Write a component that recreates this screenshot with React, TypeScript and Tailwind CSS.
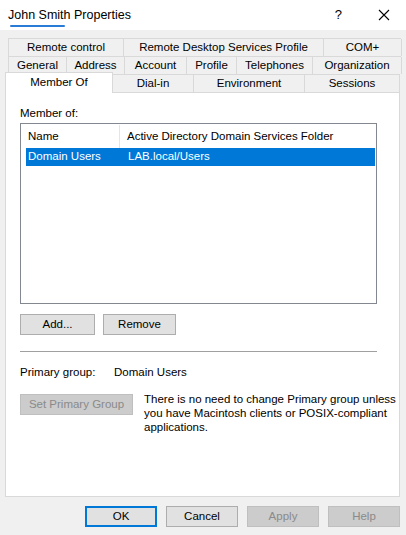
import React from 'react'

const row1 = [
    { name: 'Remote control', w: 'w-[116px]' },
    { name: 'Remote Desktop Services Profile', w: 'w-[201px]' },
    { name: 'COM+', w: 'flex-1' },
]

const row2 = [
    { name: 'General', w: 'w-[59px]' },
    { name: 'Address', w: 'w-[59px]' },
    { name: 'Account', w: 'w-[63px]' },
    { name: 'Profile', w: 'w-[51px]' },
    { name: 'Telephones', w: 'w-[77px]' },
    { name: 'Organization', w: 'flex-1' },
]

const row3 = [
    { name: 'Dial-in', w: 'w-[81px]' },
    { name: 'Environment', w: 'w-[111px]' },
    { name: 'Sessions', w: 'flex-1' },
]

const Btn: React.FC<{ label: string; w: string; disabled?: boolean; primary?: boolean }> = ({ label, w, disabled, primary }) => {
    let cls = 'bg-[#e1e1e1] border border-[#adadad] text-black'
    if (disabled) cls = 'bg-[#cccccc] border border-[#bfbfbf] text-[#8a8a8a]'
    if (primary) cls = 'bg-[#e1e1e1] border-2 border-[#0078d7] text-black'
    return (
        <div className={`${w} h-[21px] shrink-0 flex items-center justify-center ${cls}`}>{label}</div>
    )
}

const App: React.FC = () => {
    return (
        <div className="w-[406px] h-[535px] bg-[#f0f0f0] text-[11.5px] text-black overflow-hidden" style={{ fontFamily: '"Liberation Sans", Arial, sans-serif' }}>
            {/* title bar */}
            <div className="h-[30px] bg-white flex items-center pl-[8px] pr-[14px]">
                <div className="relative text-[12.5px]">
                    John Smith Properties
                    <div className="absolute left-[2px] top-[19px] w-[55px] h-[2px] rounded-full bg-[#2a7bd6]" />
                </div>
                <div className="flex-1" />
                <span className="text-[13px] mr-[36px]">?</span>
                <svg width="12" height="12" viewBox="0 0 12 12" className="mr-[2px]">
                    <path d="M1 1 L11 11 M11 1 L1 11" stroke="#000" strokeWidth="1.1" />
                </svg>
            </div>

            <div className="pl-[5px] pr-[6px] pt-[8px]">
                {/* tabs */}
                <div className="ml-[3px] mr-[-1px] flex h-[18px] border-t border-[#d9d9d9]">
                    {row1.map((t, i) => (
                        <div key={i} className={`${t.w} border-l border-r border-[#d9d9d9] -mr-px flex items-center justify-center`}>{t.name}</div>
                    ))}
                </div>
                <div className="ml-[3px] mr-[-1px] flex h-[18px] border-t border-[#d9d9d9]">
                    {row2.map((t, i) => (
                        <div key={i} className={`${t.w} border-l border-r border-[#d9d9d9] -mr-px flex items-center justify-center`}>{t.name}</div>
                    ))}
                </div>
                <div className="flex h-[18px] border-t border-[#d9d9d9] relative">
                    <div className="w-[108px] h-[21px] -mt-[3px] bg-white border-l border-t border-r border-[#d9d9d9] flex justify-center pt-[1px] relative z-10">Member Of</div>
                    {row3.map((t, i) => (
                        <div key={i} className={`${t.w} border-r border-[#d9d9d9] flex items-center justify-center`}>{t.name}</div>
                    ))}
                </div>

                {/* panel */}
                <div className="h-[405px] bg-white border border-[#d9d9d9] px-[14px] pt-[13px]">
                    <div className="leading-[14px]">Member of:</div>
                    <div className="mt-[3px] w-[357px] h-[181px] border border-[#828790] pt-[1px] pl-[5px] pr-px">
                        <div className="flex h-[23px] items-center">
                            <div className="w-[94px] pl-[2px] border-r border-[#e5e5e5] h-full flex items-center">Name</div>
                            <div className="pl-[7px]">Active Directory Domain Services Folder</div>
                        </div>
                        <div className="flex h-[18px] items-center bg-[#0078d7] text-white">
                            <div className="w-[94px] pl-[2px]">Domain Users</div>
                            <div className="pl-[8px]">LAB.local/Users</div>
                        </div>
                    </div>

                    <div className="flex gap-[8px] mt-[10px]">
                        <Btn label="Add..." w="w-[75px]" />
                        <Btn label="Remove" w="w-[73px]" />
                    </div>

                    <div className="mt-[16px] w-[357px] h-px bg-[#a0a0a0]" />

                    <div className="flex mt-[12px]">
                        <div className="w-[94px]">Primary group:</div>
                        <div>Domain Users</div>
                    </div>

                    <div className="flex mt-[13px]">
                        <Btn label="Set Primary Group" w="w-[113px]" disabled />
                        <div className="ml-[11px] -mt-[2px] leading-[14px] whitespace-nowrap">
                            There is no need to change Primary group unless<br />
                            you have Macintosh clients or POSIX-compliant<br />
                            applications.
                        </div>
                    </div>
                </div>

                {/* footer */}
                <div className="flex justify-end gap-[9px] mt-[9px] pr-[0px]">
                    <Btn label="OK" w="w-[72px]" primary />
                    <Btn label="Cancel" w="w-[72px]" />
                    <Btn label="Apply" w="w-[72px]" disabled />
                    <Btn label="Help" w="w-[72px]" disabled />
                </div>
            </div>
        </div>
    )
}

export default App
